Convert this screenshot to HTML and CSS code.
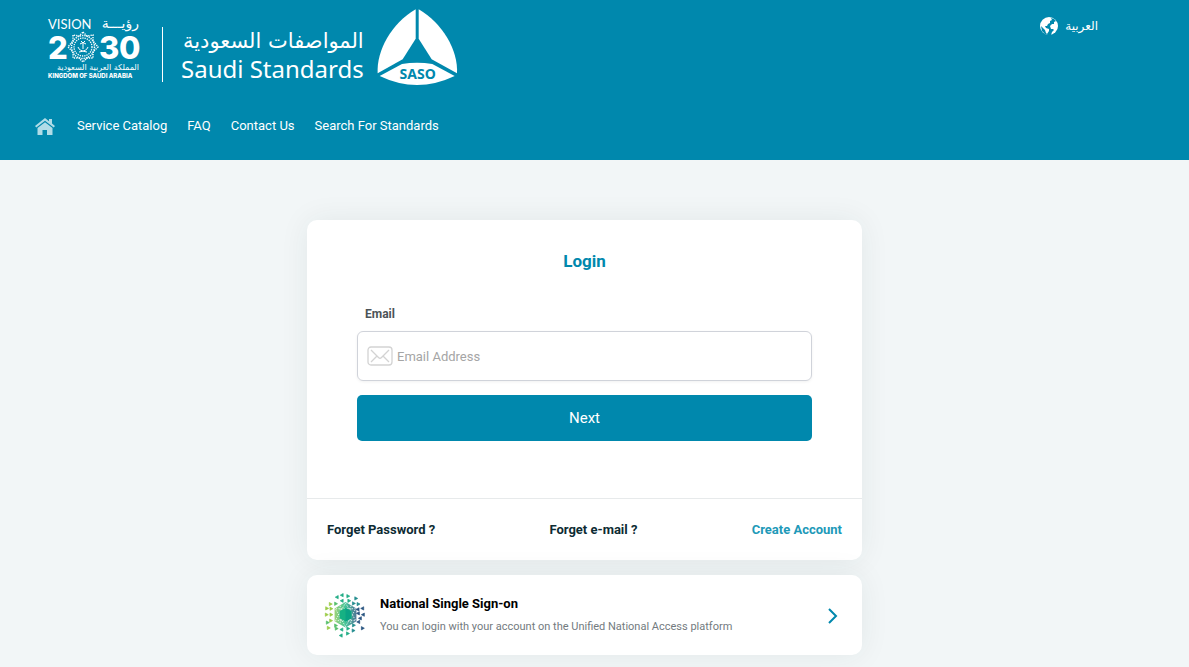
FILE: index.html
```html
<!DOCTYPE html>
<html lang="en">
<head>
<meta charset="utf-8">
<title>Saudi Standards - Login</title>
<link rel="stylesheet" href="styles.css">
</head>
<body>
<header class="site-header">
  <div class="top-bar">
    <a class="brand" href="#" aria-label="Saudi Standards">
      <svg class="vision-logo" viewBox="0 0 110 80" width="110" height="80" fill="#fff">
        <text class="vision-word" x="8" y="21">VISION</text>
        <text class="vision-ar" x="99" y="20" text-anchor="end">رؤيـــة</text>
        <text class="vision-num" x="8" y="51">2</text>
        <text class="vision-num" x="59" y="51">3</text>
        <text class="vision-num" x="79" y="51">0</text>
        <g fill="none" stroke="#fff" stroke-dasharray="1.3 1">
          <path stroke-width="1.4" d="M43 24l4 4 6-1 0 6 5 6-5 5 0 6-6 0-4 4-4-4-6 0 0-6-5-5 5-6 0-6 6 1z"/>
          <circle cx="43" cy="39" r="11.500" stroke-width="1.5"/>
          <circle cx="43" cy="39" r="9" stroke-width="1.3"/>
        </g>
        <path fill="none" stroke="#fff" d="M43 41v-6M40 36q3-3 6 0M41 33l2 2 2-2M38 39q1 4 9 5M48 39q-1 4-9 5"/>
        <text class="vision-ar-small" x="99" y="62" text-anchor="end">المملكة العربية السعودية</text>
        <text class="vision-small" x="8" y="70">KINGDOM OF SAUDI ARABIA</text>
      </svg>
      <span class="brand-name">
        <span class="brand-ar" lang="ar" dir="rtl">المواصفات السعودية</span>
        <span class="brand-en">Saudi Standards</span>
      </span>
      <svg class="saso-logo" viewBox="660 20 252 240" width="84" height="80">
        <g fill="#fff">
          <path d="M782 27V115L743 177L668 219C664 150 711 68 782 27Z"/>
          <path d="M791 27V115L830 177L906 219C910 150 862 68 791 27Z"/>
          <path d="M674 227L741 191Q786 183 832 191L899 227Q786 281 674 227Z"/>
        </g>
        <text class="saso-word" x="788" y="237" text-anchor="middle">SASO</text>
      </svg>
    </a>
    <a class="language" href="#">
      <svg viewBox="0 0 18 18" width="18" height="18">
        <circle cx="9" cy="9" r="9" fill="#fff"/>
        <path fill="#0088ad" d="M8 1l3 0 1 2-2 1 0 2-2 1-1 2-2 0 1 2 3 1 0 2-2 3-1-1-1-3-3-3-1-1 1 5 3 3 3 1 3 0 1-3 2-2-1-1-2 0-1-3 2-2 2 0 0-2 2-1-2-2-3-1z"/>
      </svg>
      <span lang="ar" dir="rtl">العربية</span>
    </a>
  </div>
  <nav class="main-nav">
    <a class="home" href="#" aria-label="Home">
      <svg viewBox="0 0 20 17" width="20" height="17" fill="#b0dce7">
        <path d="M10 0L0 8l1.300 1.600L10 2.700l8.700 6.900L20 8l-3-2.400V1h-3v2.200z"/>
        <path d="M10 4.200L2.500 10v7h5v-5h4.500v5h5.500v-7z"/>
      </svg>
    </a>
    <a href="#">Service Catalog</a>
    <a href="#">FAQ</a>
    <a href="#">Contact Us</a>
    <a href="#">Search For Standards</a>
  </nav>
</header>
<main class="page">
  <section class="card">
    <form class="login">
      <h1>Login</h1>
      <label for="email">Email</label>
      <div class="field">
        <svg viewBox="0 0 26 20" width="26" height="20" fill="none" stroke="#d3d3d3" stroke-width="1.300">
          <rect x="1" y="1" width="24" height="18" rx="3"/>
          <path d="M4 4l7.500 7.500q1.500 1.500 3 0L22 4M4 16l6-6M22 16l-6-6"/>
        </svg>
        <input id="email" type="email" placeholder="Email Address">
      </div>
      <button type="button">Next</button>
    </form>
    <div class="card-links">
      <a href="#">Forget Password ?</a>
      <a href="#">Forget e-mail ?</a>
      <a class="create" href="#">Create Account</a>
    </div>
  </section>
  <a class="card sso" href="#">
    <svg viewBox="18 15 130 135" width="43" height="45">
      <defs>
        <linearGradient id="tone" x1="0" x2="1"><stop offset="0" stop-color="#82c755"/><stop offset=".5" stop-color="#18b580"/><stop offset="1" stop-color="#24547c"/></linearGradient>
      </defs>
      <g stroke-width="2" stroke-linejoin="round">
      <path fill="#9acb45" stroke="#9acb45" d="M34 43l9 5-9 5zM23 56l9 5-9 5zM36 57l9 5-9 5zM22 75l9 5-9 5zM36 75l9 5-9 5zM35 93l9 5-9 5zM28 115l9 5-9 5z"/>
      <path fill="#55be6a" stroke="#55be6a" d="M25 99l9 5-9 5zM50 108l9 5-9 5zM52 117l9 5-9 5zM50 42l9 5-9 5z"/>
      <path fill="#22ad86" stroke="#22ad86" d="M61 22v10l-9-5zM76 16v10l-9-5zM87 19l9 5-9 5zM76 33v10l-9-5zM90 33l9 5-9 5zM75 120v10l-9-5zM73 138v10l-9-5zM86 132l9 5-9 5zM87 117l9 5-9 5z"/>
      <path fill="#228b8d" stroke="#228b8d" d="M111 26l9 5-9 5zM104 41l9 5-9 5zM118 43l9 5-9 5zM104 107l9 5-9 5zM103 123l9 5-9 5z"/>
      <path fill="#28547f" stroke="#28547f" d="M124 59v10l-9-5zM138 56v10l-9-5zM125 71v10l-9-5zM140 75v10l-9-5zM131 86v10l-9-5zM126 97v10l-9-5zM131 116l9 5-9 5z"/>
      </g>
      <path fill="url(#tone)" opacity=".8" d="M83 42l33 19v39l-33 19-33-19V61z"/>
      <g fill="none" stroke="#fff" stroke-width="3" opacity=".8">
        <path d="M83 45L114 98H52zM83 116L52 62h62zM67 53v55M99 53v55" stroke-dasharray="4 4"/>
      </g>
      <path fill="#16b183" d="M83 60l18 10v21l-18 10-18-10V70z"/>
      <path fill="#0aa383" d="M83 60l18 10v21l-18 10z"/>
    </svg>
    <span class="sso-text">
      <strong>National Single Sign-on</strong>
      <small>You can login with your account on the Unified National Access platform</small>
    </span>
    <svg class="chevron" viewBox="0 0 10 16" width="10" height="16" fill="none" stroke="#0088ad" stroke-width="2"><path d="M1 1l7 7-7 7"/></svg>
  </a>
</main>
</body>
</html>
```
FILE: styles.css
```css
* { box-sizing: border-box; }
body {
  margin: 0;
  background: #f2f6f7;
  font-family: Roboto, "Noto Sans", sans-serif;
  font-size: 13px;
  color: #0d2b33;
}
a { color: inherit; text-decoration: none; }
svg { flex: none; }

.site-header { padding-bottom: 25px; background: #0088ad; color: #fff; }
.top-bar { display: flex; justify-content: space-between; padding: 7px 91px 0 40px; }
.brand { display: flex; align-items: flex-start; }
.vision-logo { margin-top: 1px; }
.vision-word { font: 400 13px Lato, sans-serif; }
.vision-ar { font: 14px "DejaVu Sans", sans-serif; }
.vision-num { font: 800 31px Inter, sans-serif; }
.vision-ar-small { font: 8px "DejaVu Sans", sans-serif; }
.vision-small { font: 800 6px Inter, sans-serif; }
.brand-name {
  display: flex;
  flex-direction: column;
  height: 55px;
  margin: 20px 11px 0 12px;
  padding-left: 18px;
  border-left: 1px solid #fff;
}
.brand-ar { font: 21px/28px "DejaVu Sans", sans-serif; white-space: nowrap; }
.brand-en { font: 24px/28px "Noto Sans", sans-serif; white-space: nowrap; }
.saso-word { font: 700 42px "Noto Sans", sans-serif; fill: #0088ad; }
.language { display: flex; align-items: center; gap: 7px; height: 20px; margin-top: 9px; font: 12px "DejaVu Sans", sans-serif; }

.main-nav { display: flex; align-items: center; gap: 20px; height: 20px; margin-top: 27px; padding-left: 35px; }
.home { display: flex; margin-right: 2px; padding-top: 2px; }

.page { display: flex; flex-direction: column; align-items: center; gap: 15px; padding: 60px 20px 12px 0; }
.card {
  width: 100%;
  max-width: 555px;
  background: #fff;
  border-radius: 10px;
  box-shadow: 0 0 30px rgba(0, 50, 60, .07);
}
.login { display: flex; flex-direction: column; padding: 30px 50px 57px; }
h1 { margin: 0 0 32px; font-size: 17px; line-height: 22px; font-weight: 700; text-align: center; color: #0088ad; }
label { padding: 0 8px; font-size: 12px; line-height: 20px; font-weight: 700; color: #4c5357; }
.field {
  display: flex;
  align-items: center;
  gap: 4px;
  height: 50px;
  margin: 7px 0 14px;
  padding: 0 9px;
  border: 1px solid #d0d3da;
  border-radius: 6px;
  box-shadow: 0 1px 3px rgba(0, 0, 0, .06);
}
.field input { flex: 1; min-width: 0; padding: 0; border: 0; outline: 0; background: none; font: inherit; }
.field input::placeholder { color: #a5a5a5; }
button { height: 46px; border: 0; border-radius: 5px; background: #0088ad; color: #fff; font: 15px Roboto, sans-serif; }
.card-links {
  display: flex;
  justify-content: space-between;
  padding: 20px;
  border-top: 1px solid #e7eaeb;
  line-height: 21px;
  font-weight: 700;
}
.create { color: #2199b8; }
.sso { display: flex; align-items: center; height: 80px; padding: 0 24px 0 17px; }
.sso-text { display: flex; flex: 1; flex-direction: column; gap: 3px; margin-left: 13px; }
.sso-text strong { font-size: 13px; line-height: 20px; color: #000; }
.sso-text small { font-size: 11px; line-height: 20px; color: #737b80; }
.chevron { margin-top: 2px; }
```
